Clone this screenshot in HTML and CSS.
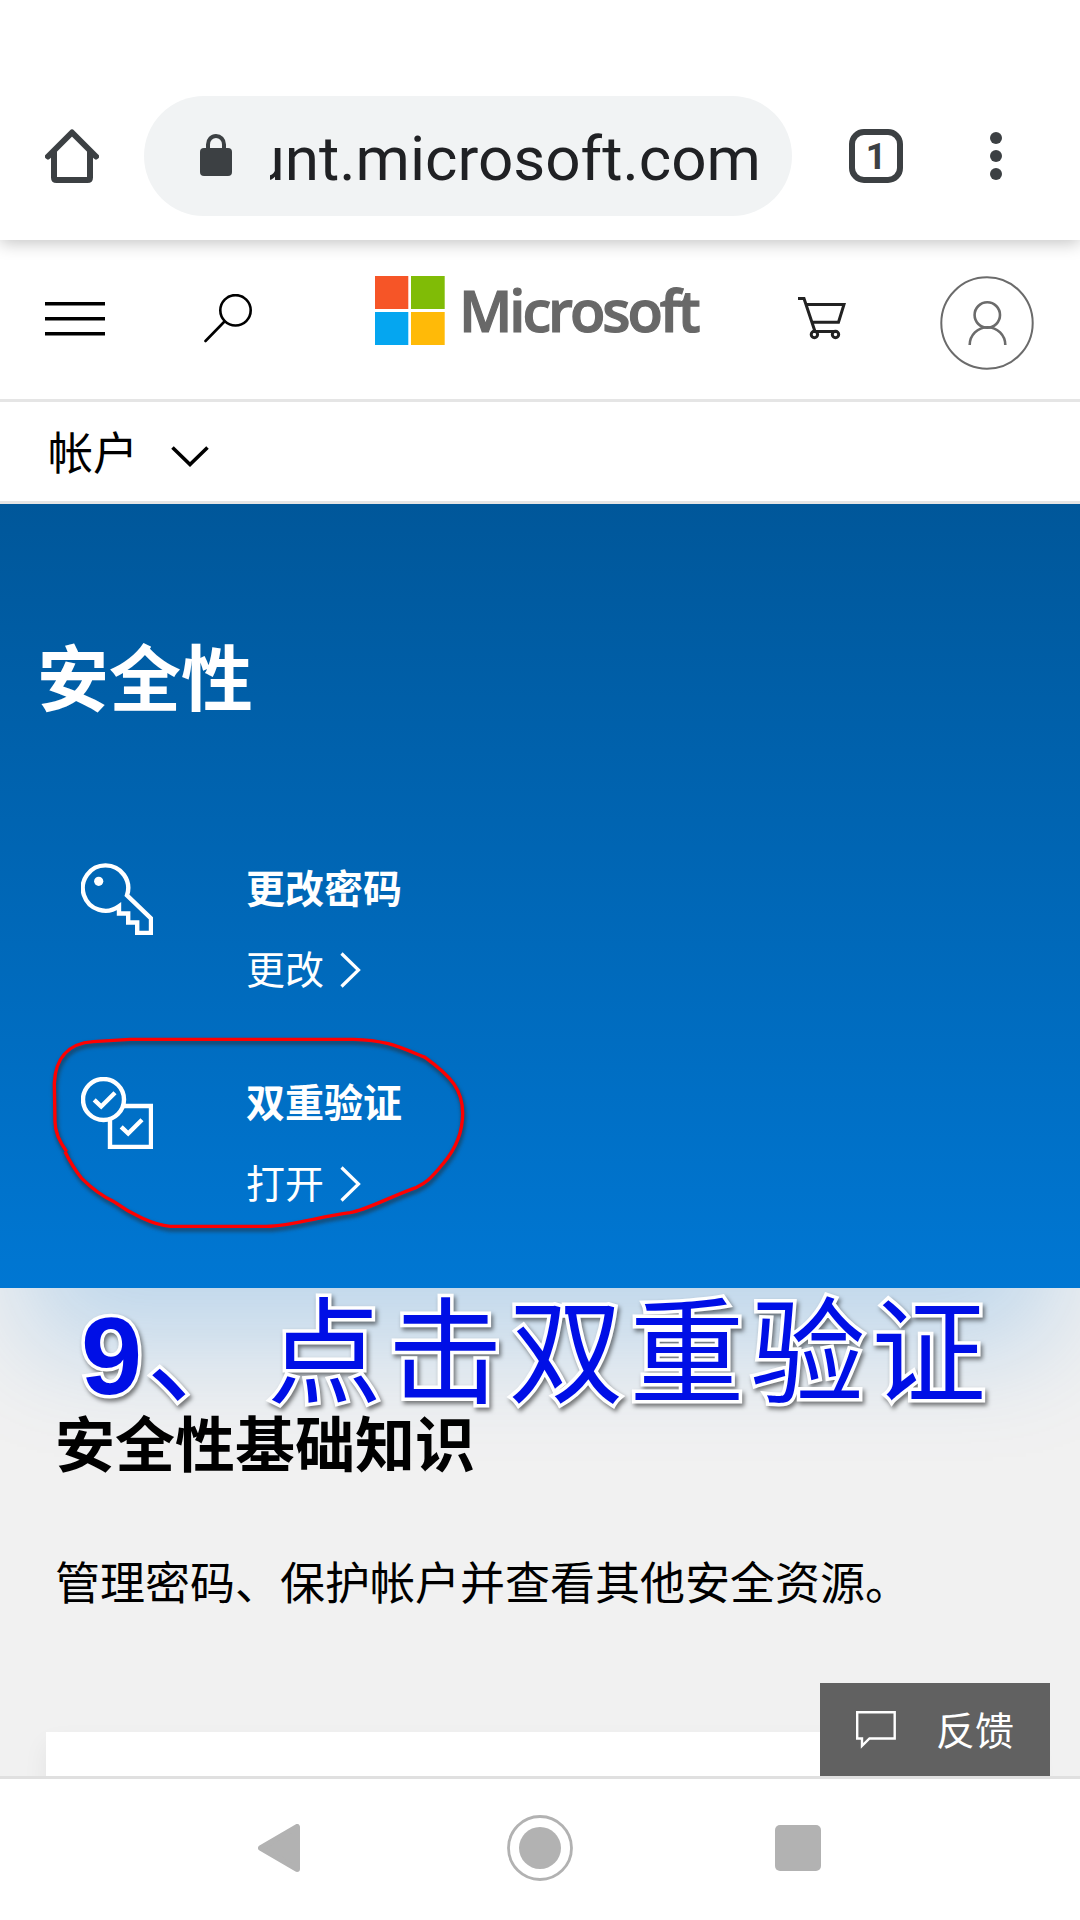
FILE: index.html
```html
<!DOCTYPE html>
<html lang="zh-CN">
<head>
<meta charset="utf-8">
<title>Microsoft 帐户 | 安全性</title>
<link rel="stylesheet" href="styles.css">
</head>
<body>
<div class="screen">
  <header class="browser-bar">
    <svg class="home-icon" width="54" height="54" viewBox="0 0 54 54"><path d="M3 27.500 27 3.500 51 27.500M9 22V48.500Q9 51 11.500 51H42.500Q45 51 45 48.500V22"/></svg>
    <div class="address">
      <svg width="32" height="42" viewBox="0 0 32 42"><rect y="14" width="32" height="28" rx="4" fill="#3c4043"/><path d="M8 16V10.500a8 8.500 0 0 1 16 0V16" fill="none" stroke="#3c4043" stroke-width="4"/></svg>
      <div class="url"><span>unt.microsoft.com</span></div>
    </div>
    <div class="tabs">1</div>
    <svg class="more" width="12" height="48" viewBox="0 0 12 48"><circle cx="6" cy="6" r="6"/><circle cx="6" cy="24" r="6"/><circle cx="6" cy="42" r="6"/></svg>
  </header>

  <nav class="site-bar">
    <svg class="burger" width="60" height="36" viewBox="0 0 60 36"><path d="M0 2.800H60M0 17.800H60M0 32.800H60"/></svg>
    <svg class="search" width="50" height="50" viewBox="0 0 50 50"><circle cx="31.500" cy="16.300" r="15.200"/><path d="M20.500 27.500 1.500 47"/></svg>
    <div class="brand">
      <svg width="70" height="69" viewBox="0 0 70 69"><path fill="#f65527" d="M0 0h33.300v33H0z"/><path fill="#80bc06" d="M36 0h33.700v33H36z"/><path fill="#05a6f0" d="M0 36h33.300v33H0z"/><path fill="#ffba08" d="M36 36h33.700v33H36z"/></svg>
      <span class="brand-name">Microsoft</span>
    </div>
    <svg class="cart" width="48" height="43" viewBox="0 0 48 43"><path d="M0 1.500H6L17 34.500H38M7.500 7.500H46L40.500 25.300H13.500"/><circle cx="16.400" cy="37.500" r="3.200"/><circle cx="37.500" cy="37.500" r="3.200"/></svg>
    <svg class="avatar" width="94" height="94" viewBox="0 0 94 94"><circle cx="47" cy="47" r="45.700" stroke-width="2"/><circle cx="47.300" cy="39" r="12.700" stroke-width="2.600"/><path stroke-width="2.600" d="M29.700 69A17.800 17.800 0 0 1 65.300 69"/></svg>
  </nav>

  <div class="account-bar">
    <span>帐户</span>
    <svg width="38" height="21" viewBox="0 0 38 21"><path d="M1.500 1.500 19 18.500 36.500 1.500"/></svg>
  </div>

  <main class="page">
    <section class="hero">
      <h1>安全性</h1>
      <div class="task">
        <svg class="task-icon" width="72" height="72" viewBox="0 0 72 72"><path d="M46 32.300A22.700 22.700 0 1 0 38 43.300V50.500H47.200V59.500H56.200V70H70V55.500Z"/><circle class="dot" cx="17.700" cy="18.300" r="4.600"/></svg>
        <div class="task-text">
          <h2>更改密码</h2>
          <a>更改<svg width="21" height="36" viewBox="0 0 21 36"><path d="M1.500 1.500 18.500 18 1.500 34.500"/></svg></a>
        </div>
      </div>
      <div class="task">
        <svg class="task-icon" width="72" height="72" viewBox="0 0 72 72"><circle cx="22.500" cy="22.500" r="20.500"/><path d="M42 29H70V70H29V42M13.200 22.800 20.200 29.500 34 15.800M40.200 49.800 47.200 56.500 61 42.800"/></svg>
        <div class="task-text">
          <h2>双重验证</h2>
          <a>打开<svg width="21" height="36" viewBox="0 0 21 36"><path d="M1.500 1.500 18.500 18 1.500 34.500"/></svg></a>
        </div>
      </div>
    </section>
    <section class="basics">
      <h2>安全性基础知识</h2>
      <p>管理密码、保护帐户并查看其他安全资源。</p>
      <div class="card"></div>
    </section>
    <div class="feedback">
      <svg width="40" height="38" viewBox="0 0 40 38"><path d="M1.200 1.200H38.700V27.500H13.500L6 34.800V27.500H1.200Z"/></svg>
      <span>反馈</span>
    </div>
  </main>

  <footer class="system-nav">
    <svg width="42" height="48" viewBox="0 0 42 48"><path d="M3 24 39 3V45Z" fill="#b2b2b2" stroke="#b2b2b2" stroke-width="6" stroke-linejoin="round"/></svg>
    <svg width="66" height="66" viewBox="0 0 66 66"><circle cx="33" cy="33" r="31.500" fill="none" stroke="#b2b2b2" stroke-width="2.800"/><circle cx="33" cy="33" r="21" fill="#b2b2b2"/></svg>
    <span class="recent"></span>
  </footer>

  <svg class="marker" width="460" height="270" viewBox="0 0 1380 810"><path d="M110 425C85 390 75 360 75 335L73 220C76 150 110 100 190 95L300 88H970C1070 90 1110 112 1185 142C1265 200 1298 240 1298 310C1298 380 1270 425 1240 460C1200 510 1185 520 1160 532C1080 560 1010 600 960 608C870 620 780 648 710 649H420C370 645 300 610 255 577C220 560 190 540 155 505C135 480 120 455 105 425"/></svg>
  <div class="caption"><span class="num">9</span><span>、点击双重验证</span></div>
</div>
</body>
</html>
```
FILE: styles.css
```css
* { box-sizing: border-box; }
body, h1, h2, p { margin: 0; }
svg { display: block; flex: none; }

.screen {
  position: relative;
  display: flex;
  flex-direction: column;
  width: 1080px;
  height: 1920px;
  overflow: hidden;
  background: #fff;
  color: #000;
  font-family: "Noto Sans CJK SC", sans-serif;
}

.browser-bar {
  position: relative;
  z-index: 1;
  display: flex;
  align-items: center;
  height: 240px;
  padding: 72px 78px 0 45px;
  background: #fff;
  box-shadow: 0 3px 16px rgba(0, 0, 0, .24);
}
.home-icon { fill: none; stroke: #3c4043; stroke-width: 6; stroke-linecap: round; stroke-linejoin: round; }
.address {
  display: flex;
  align-items: center;
  width: 648px;
  height: 120px;
  margin-left: 45px;
  padding: 0 31px 0 56px;
  border-radius: 60px;
  background: #f1f3f4;
}
.address svg { margin-bottom: 2px; }
.url {
  display: flex;
  justify-content: flex-end;
  width: 491px;
  margin-left: 38px;
  padding-top: 5px;
  overflow: hidden;
  font: 62px/80px Roboto, sans-serif;
  color: #202124;
}
.tabs {
  width: 54px;
  height: 54px;
  margin-left: 57px;
  border: 6px solid #3c4043;
  border-radius: 15px;
  font: bold 36px/44px Roboto, sans-serif;
  text-align: center;
  color: #3c4043;
}
.more { margin-left: 87px; fill: #3c4043; }

.site-bar {
  display: flex;
  align-items: flex-start;
  height: 162px;
  padding: 36px 46px 0 45px;
  border-bottom: 3px solid #e5e5e5;
}
.site-bar svg { fill: none; }
.burger { margin-top: 25px; stroke: #000; stroke-width: 3.6; }
.search { margin: 18px 0 0 99px; stroke: #000; stroke-width: 2.6; stroke-linecap: round; }
.brand { display: flex; margin-left: 121px; }
.brand-name {
  width: 239px;
  margin-left: 14px;
  font: 600 58px/67px "Open Sans", sans-serif;
  letter-spacing: -3.1px;
  color: #686868;
  -webkit-text-stroke: 1.2px #686868;
}
.cart { margin: 21px 0 0 100px; stroke: #222; stroke-width: 3; }
.avatar { margin-left: 94px; stroke: #6b6b6b; }

.account-bar {
  display: flex;
  align-items: center;
  height: 102px;
  padding: 0 0 1px 48px;
  border-bottom: 3px solid #e5e5e5;
  font-size: 45px;
  line-height: 60px;
}
.account-bar svg { margin: 11px 0 0 33px; fill: none; stroke: #000; stroke-width: 3.6; }

.page {
  position: relative;
  height: 1272px;
  overflow: hidden;
  background: #f1f1f1;
}
.hero {
  height: 784px;
  padding: 122px 37px 0;
  background: linear-gradient(#00579a, #0077d3);
  box-shadow: 0 86px 104px -26px rgba(0, 120, 215, .21);
  color: #fff;
}
.hero h1 { margin-bottom: 124px; font-size: 72px; line-height: 96px; }
.task { display: flex; margin-bottom: 52px; padding-left: 44px; }
.task-icon { margin: 17px 93px 0 0; fill: none; stroke: #fff; stroke-width: 4.400; }
.task-icon .dot { fill: #fff; stroke: none; }
.task-text h2 { font-size: 39px; line-height: 81px; }
.task-text a { display: flex; align-items: center; font-size: 39px; line-height: 81px; }
.task-text a svg { margin: 4px 0 0 16px; fill: none; stroke: #fff; stroke-width: 3.2; }

.basics { padding: 113px 46px 0; }
.basics h2 { padding-left: 9px; font-size: 60px; line-height: 80px; }
.basics p { margin: 70px 0 121px; padding-left: 9px; font-size: 45px; line-height: 60px; }
.card { height: 120px; background: #fff; box-shadow: 0 12px 24px rgba(0, 0, 0, .06); }

.feedback {
  position: absolute;
  right: 30px;
  bottom: 0;
  display: flex;
  align-items: center;
  width: 230px;
  height: 93px;
  padding-left: 36px;
  background: #616161;
  color: #fff;
  font-size: 39px;
  line-height: 89px;
}
.feedback svg { fill: none; stroke: #fff; stroke-width: 2.4; }
.feedback span { margin: 0 0 2px 40px; }

.system-nav {
  position: relative;
  display: flex;
  align-items: center;
  height: 144px;
  padding: 0 0 3px 258px;
  border-top: 3px solid #e0e0e0;
  background: #fff;
}
.system-nav svg + svg { margin-left: 207px; }
.recent { width: 46px; height: 46px; margin-left: 202px; border-radius: 5px; background: #b2b2b2; }

/* hand-drawn annotation over the page */
.marker {
  position: absolute;
  left: 30px;
  top: 1010px;
  fill: none;
  stroke: #f00;
  stroke-width: 10;
  filter: drop-shadow(1px 3px 2px rgba(40, 40, 40, .8));
}
.caption {
  position: absolute;
  left: 81px;
  top: 1275px;
  display: flex;
  align-items: baseline;
  font-size: 115px;
  line-height: 138px;
  letter-spacing: 5.8px;
  white-space: nowrap;
  color: #000fe6;
  -webkit-text-stroke: 7px #fff;
  paint-order: stroke fill;
  filter: drop-shadow(2px 3px 2px rgba(0, 0, 0, .5));
}
.caption .num { font-family: "Liberation Sans", sans-serif; font-weight: bold; font-size: 110px; letter-spacing: 4px; }
```
